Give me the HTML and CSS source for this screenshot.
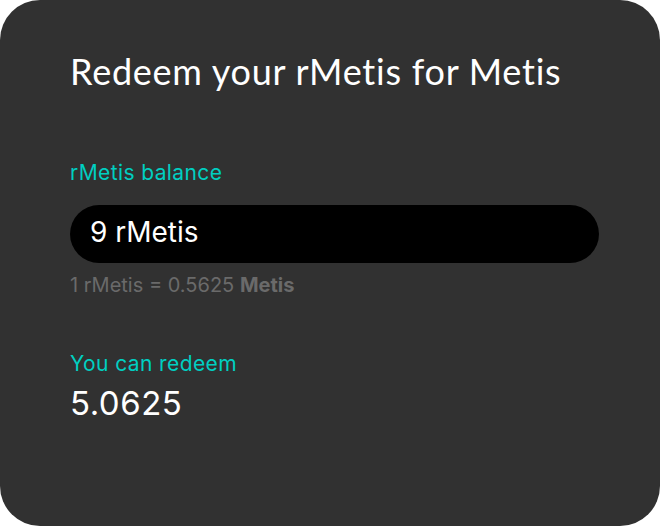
FILE: index.html
```html
<!DOCTYPE html>
<html>
<head>
<meta charset="utf-8">
<link rel="stylesheet" href="styles.css">
</head>
<body>
<div class="card">
  <h1 class="title">Redeem your rMetis for Metis</h1>
  <div class="label balance-label">rMetis balance</div>
  <div class="field">9 rMetis</div>
  <div class="rate">1 rMetis = 0.5625 <b>Metis</b></div>
  <div class="label redeem-label">You can redeem</div>
  <div class="amount">5.0625</div>
</div>
</body>
</html>
```
FILE: styles.css
```css
html, body {
  margin: 0;
  padding: 0;
  background: #ffffff;
}
.card {
  width: 660px;
  height: 526px;
  box-sizing: border-box;
  background: #313131;
  border-radius: 40px;
  padding: 49px 61px 0 70px;
  font-family: Inter, "Noto Sans", sans-serif;
  display: flex;
  flex-direction: column;
}
.title {
  margin: 0;
  font-family: Lato, "Open Sans", sans-serif;
  font-weight: 400;
  font-size: 36px;
  line-height: 44px;
  letter-spacing: 0.75px;
  color: #ffffff;
}
.label {
  font-size: 21px;
  line-height: 24px;
  letter-spacing: 0.4px;
  color: #00cfc1;
}
.balance-label {
  margin-top: 68px;
}
.field {
  margin-top: 20px;
  height: 58px;
  box-sizing: border-box;
  border-radius: 29px;
  background: #000000;
  color: #ffffff;
  font-size: 28px;
  display: flex;
  align-items: center;
  padding: 0 0 4px 20px;
}
.rate {
  margin-top: 10px;
  font-size: 20px;
  line-height: 24px;
  color: #6a6a6a;
}
.rate b {
  font-weight: 700;
}
.redeem-label {
  margin-top: 55px;
}
.amount {
  margin-top: 7px;
  font-size: 33px;
  line-height: 40px;
  letter-spacing: 0.5px;
  color: #ffffff;
}
```
